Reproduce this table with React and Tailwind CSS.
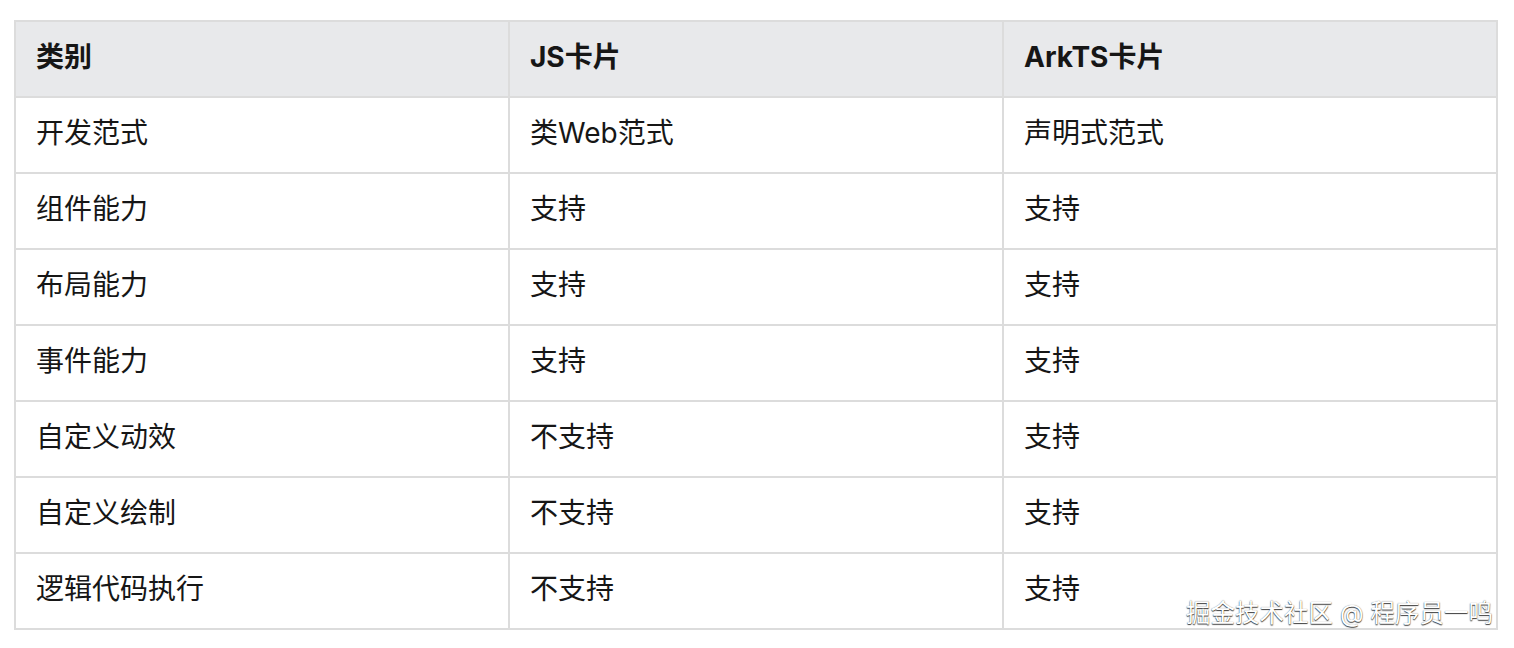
import React from "react";

const rows = [
  ["开发范式", "类Web范式", "声明式范式"],
  ["组件能力", "支持", "支持"],
  ["布局能力", "支持", "支持"],
  ["事件能力", "支持", "支持"],
  ["自定义动效", "不支持", "支持"],
  ["自定义绘制", "不支持", "支持"],
  ["逻辑代码执行", "不支持", "支持"],
];

const font = { fontFamily: '"Inter", "Noto Sans CJK SC", sans-serif' };

const Cell = ({ children, head }) => (
  <div
    className={`h-[76px] flex items-center pl-[20px] pb-[4px] border-r-2 border-b-2 border-[#dcdcdc] text-[28px] text-[#161616] ${
      head ? "bg-[#e8e9eb] font-bold" : "bg-white"
    }`}
  >
    {children}
  </div>
);

export default function App() {
  return (
    <div className="w-[1514px] h-[648px] bg-white pt-[20px] pl-[14px] relative" style={font}>
      <div className="w-[1484px] grid grid-cols-3 border-t-2 border-l-2 border-[#dcdcdc]">
        <Cell head>类别</Cell>
        <Cell head>JS卡片</Cell>
        <Cell head>ArkTS卡片</Cell>
        {rows.map((r) => r.map((c, i) => <Cell key={r[0] + i}>{c}</Cell>))}
      </div>

      {/* watermark */}
      <div className="absolute right-[21px] top-[601px] text-[24.5px] leading-none text-white [text-shadow:0_1px_1px_rgba(0,0,0,0.75),0_0_1px_rgba(0,0,0,0.5)]">
        掘金技术社区 @ 程序员一鸣
      </div>
    </div>
  );
}
